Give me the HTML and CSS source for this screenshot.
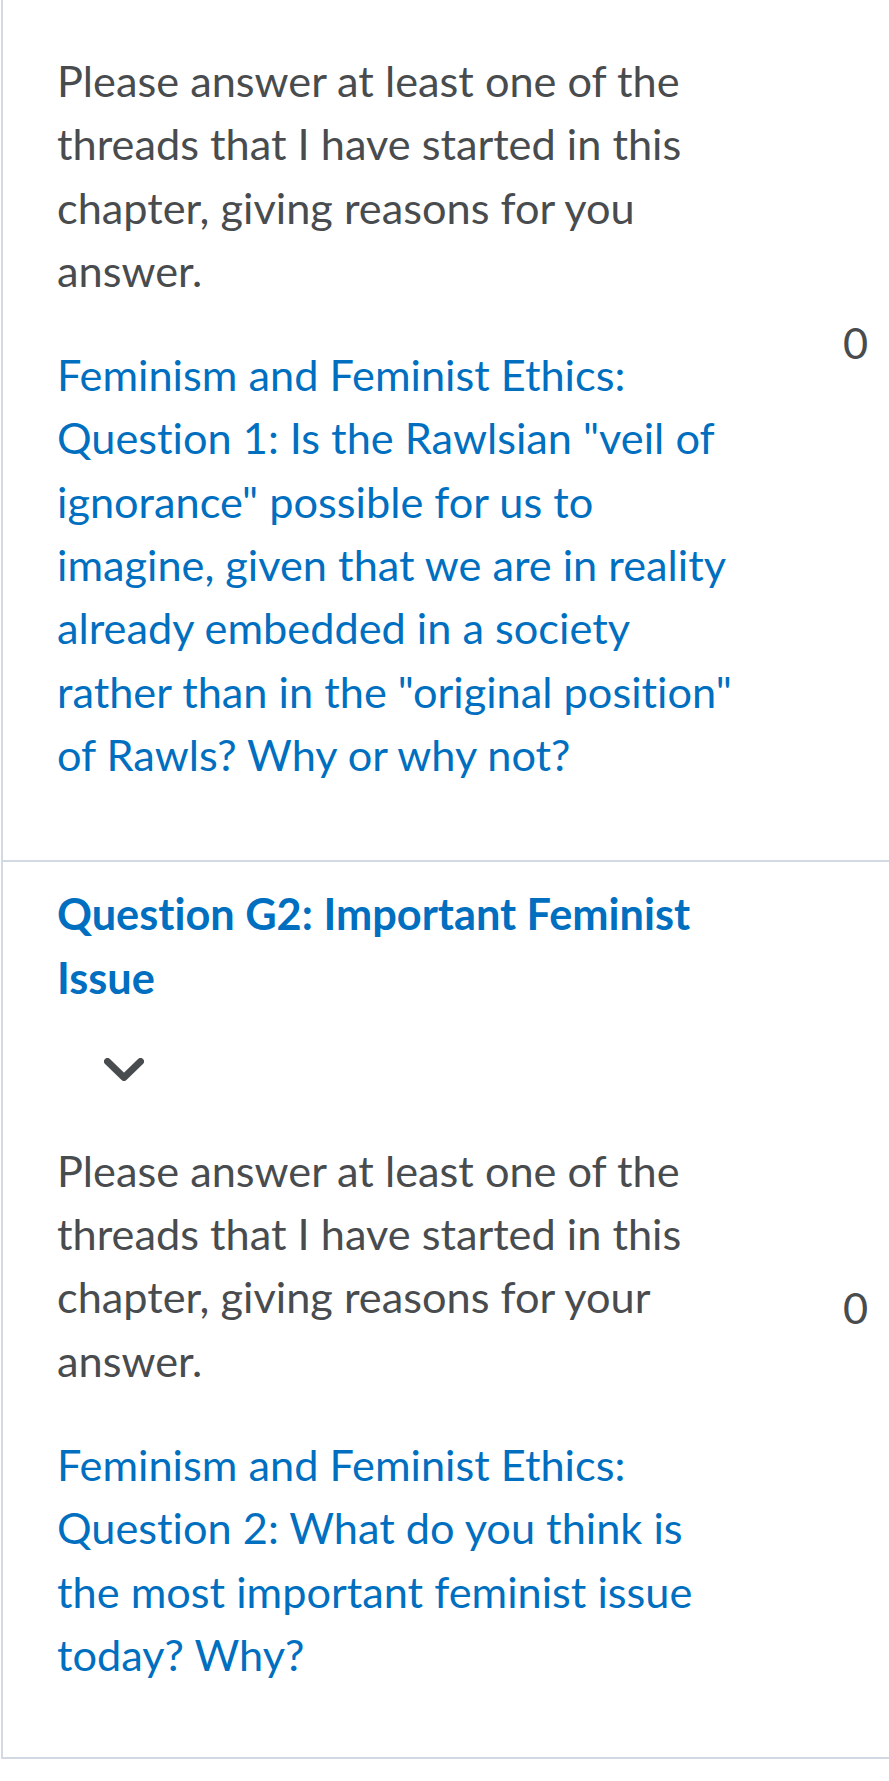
FILE: index.html
```html
<!DOCTYPE html>
<html lang="en">
<head>
<meta charset="utf-8">
<title>Discussions</title>
<link rel="stylesheet" href="styles.css">
</head>
<body>
<div class="topics">
  <div class="row row-scrolled">
    <div class="topic">
      <p class="desc">Please answer at least one of the threads that I have started in this chapter, giving reasons for you answer.</p>
      <a class="link" href="#">Feminism and Feminist Ethics: Question 1: Is the Rawlsian "veil of ignorance" possible for us to imagine, given that we are in reality already embedded in a society rather than in the "original position" of Rawls? Why or why not?</a>
    </div>
    <div class="count">0</div>
  </div>
  <div class="row">
    <div class="topic">
      <h2 class="title">Question G2: Important Feminist Issue</h2>
      <div class="toggle">
        <svg class="chevron" width="40" height="23" viewBox="0 0 40 23" aria-hidden="true"><path d="M3.5 3.5 L20 19.5 L36.5 3.5" fill="none" stroke="#494c4e" stroke-width="7" stroke-linecap="round" stroke-linejoin="round"/></svg>
      </div>
      <p class="desc">Please answer at least one of the threads that I have started in this chapter, giving reasons for your answer.</p>
      <a class="link" href="#">Feminism and Feminist Ethics: Question 2: What do you think is the most important feminist issue today? Why?</a>
    </div>
    <div class="count">0</div>
  </div>
</div>
</body>
</html>
```
FILE: styles.css
```css
html, body {
  margin: 0;
  padding: 0;
  background: #ffffff;
}
body {
  font-family: Lato, "Open Sans", sans-serif;
  font-size: 43.3px;
  line-height: 63.3px;
  color: #494c4e;
  font-variant-ligatures: no-common-ligatures;
  overflow: hidden;
}
.topics {
  margin-top: -169px;
  margin-left: 1px;
  border-left: 2px solid #d3d9e3;
}
.row {
  display: flex;
  border-bottom: 2px solid #d3d9e3;
}
.topic {
  width: 680px;
  padding: 20px 0 71px 54px;
}
.row-scrolled .topic {
  padding-top: 218px;
  padding-bottom: 74px;
}
.title {
  margin: 0;
  font-size: 43.3px;
  font-weight: 700;
  line-height: 63.3px;
  color: #006fbf;
}
.toggle {
  height: 130px;
  padding-left: 47px;
  box-sizing: border-box;
  padding-top: 49px;
}
.chevron {
  display: block;
}
.desc {
  margin: 0 0 41px 0;
}
.link {
  display: block;
  color: #006fbf;
  text-decoration: none;
}
.count {
  flex: 1;
  align-self: center;
  text-align: right;
  padding-right: 21px;
  padding-bottom: 5px;
}
```
